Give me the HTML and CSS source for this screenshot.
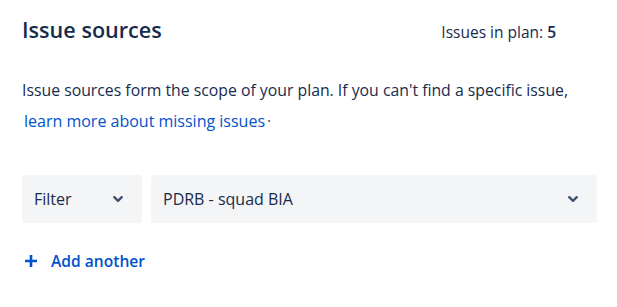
FILE: index.html
```html
<!DOCTYPE html>
<html lang="en">
<head>
  <meta charset="UTF-8" />
  <meta name="viewport" content="width=device-width, initial-scale=1.0"/>
  <title>Issue sources</title>
  <link rel="stylesheet" href="styles.css">
</head>
<body>
  <div class="panel">
    <div class="header">
      <h2>Issue sources</h2>
      <div class="count">Issues in plan: <strong>5</strong></div>
    </div>

    <p class="intro">
      Issue sources form the scope of your plan. If you can't find a specific issue,
      <a href="#" class="link">learn more about missing issues</a><span class="dot">·</span>
    </p>

    <div class="sources">
      <div class="select select-type">
        <span>Filter</span>
        <svg class="chevron" width="10" height="6" viewBox="0 0 10 6"><path d="M1.3 1.2 L5 4.8 L8.7 1.2" /></svg>
      </div>
      <div class="select select-value">
        <span>PDRB - squad BIA</span>
        <svg class="chevron" width="10" height="6" viewBox="0 0 10 6"><path d="M1.3 1.2 L5 4.8 L8.7 1.2" /></svg>
      </div>
    </div>

    <a href="#" class="add">
      <svg class="plus" width="14" height="14" viewBox="0 0 14 14"><path d="M7 1 V13 M1 7 H13" /></svg>
      <span>Add another</span>
    </a>
  </div>
</body>
</html>
```
FILE: styles.css
```css
body {
  font-family: 'Open Sans', sans-serif;
  background: white;
  color: #172b4d;
  margin: 0;
  padding: 0;
}

.panel {
  padding: 16px 20px 0 22px;
}

.header {
  display: flex;
  justify-content: space-between;
  align-items: baseline;
}

.header h2 {
  margin: 0;
  font-size: 21.6px;
  line-height: 28px;
  font-weight: 600;
}

.count {
  margin-right: 41px;
  font-size: 15.5px;
}

.count strong {
  font-weight: 600;
}

.intro {
  margin: 31px 0 0;
  font-size: 15.8px;
  line-height: 31px;
}

.link {
  color: #0052cc;
  font-size: 16px;
  font-weight: 500;
  text-decoration: none;
  margin-left: 2px;
}

.dot {
  color: #42526e;
  margin-left: 2px;
}

.sources {
  display: flex;
  gap: 9px;
  margin-top: 38px;
}

.select {
  height: 48px;
  background: #f4f5f7;
  border-radius: 3px;
  display: flex;
  align-items: center;
  justify-content: space-between;
  padding: 0 19px 0 12px;
  font-size: 16px;
}

.select-type {
  width: 120px;
  box-sizing: border-box;
}

.select-value {
  flex: 1;
}

.chevron path {
  fill: none;
  stroke: #42526e;
  stroke-width: 2.4;
  stroke-linecap: round;
  stroke-linejoin: round;
}

.add {
  display: flex;
  align-items: center;
  gap: 13px;
  margin-top: 28px;
  padding-left: 2px;
  height: 20px;
  color: #0052cc;
  font-size: 15.6px;
  font-weight: 600;
  text-decoration: none;
}

.plus path {
  fill: none;
  stroke: #0052cc;
  stroke-width: 2.6;
}
```
